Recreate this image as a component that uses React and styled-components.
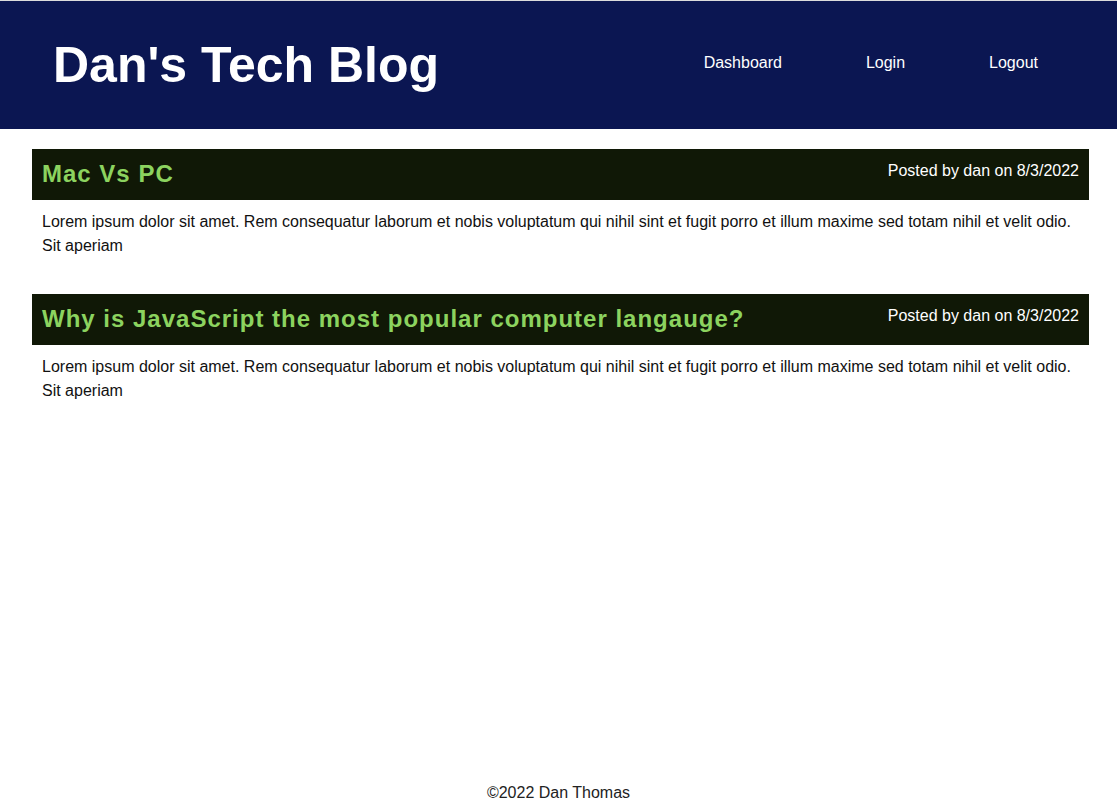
import React from 'react';
import styled, { createGlobalStyle } from 'styled-components';

const GlobalStyle = createGlobalStyle`
  html, body {
    margin: 0;
    padding: 0;
    background: #ffffff;
    font-family: "Liberation Sans", Arial, sans-serif;
  }
`;

const Page = styled.div`
  border-top: 1px solid #dcdcdc;
  display: flex;
  flex-direction: column;
  min-height: calc(100vh - 1px);
`;

const Header = styled.header`
  align-items: center;
  background-color: #0b1652;
  color: #ffffff;
  display: flex;
  height: 128px;
  justify-content: space-between;
  padding: 0 79px 0 53px;
`;

const SiteTitle = styled.h1`
  font-size: 50px;
  font-weight: 700;
  margin: 0;
`;

const Nav = styled.nav`
  display: flex;
  gap: 84px;
  position: relative;
  top: -2px;
`;

const NavLink = styled.a`
  color: #ffffff;
  font-size: 16px;
  text-decoration: none;
`;

const Main = styled.main`
  display: flex;
  flex: 1;
  flex-direction: column;
  gap: 36px;
  padding: 20px 28px 0 32px;
`;

const Post = styled.article``;

const PostHeader = styled.div`
  align-items: flex-start;
  background-color: #101806;
  box-sizing: border-box;
  display: flex;
  height: 51px;
  justify-content: space-between;
  padding: 0 10px;
`;

const PostTitle = styled.h2`
  color: #8cd35f;
  font-size: 24px;
  font-weight: 700;
  letter-spacing: 1px;
  margin: 0;
  padding-top: 11px;
`;

const PostMeta = styled.span`
  color: #ffffff;
  font-size: 16px;
  padding-top: 13px;
`;

const PostBody = styled.p`
  color: #111111;
  font-size: 16px;
  line-height: 24px;
  margin: 0;
  padding: 10px 10px 0;
`;

const Footer = styled.footer`
  color: #222222;
  font-size: 16px;
  line-height: 16px;
  text-align: center;
`;

const lorem =
  'Lorem ipsum dolor sit amet. Rem consequatur laborum et nobis voluptatum qui nihil sint et fugit porro et illum maxime sed totam nihil et velit odio. Sit aperiam';

const posts = [
  { id: 1, title: 'Mac Vs PC', author: 'dan', date: '8/3/2022', body: lorem },
  {
    id: 2,
    title: 'Why is JavaScript the most popular computer langauge?',
    author: 'dan',
    date: '8/3/2022',
    body: lorem,
  },
];

const App = () => {
  return (
    <>
      <GlobalStyle />
      <Page>
        <Header>
          <SiteTitle>Dan's Tech Blog</SiteTitle>
          <Nav>
            <NavLink href="#">Dashboard</NavLink>
            <NavLink href="#">Login</NavLink>
            <NavLink href="#">Logout</NavLink>
          </Nav>
        </Header>
        <Main>
          {posts.map((post) => (
            <Post key={post.id}>
              <PostHeader>
                <PostTitle>{post.title}</PostTitle>
                <PostMeta>
                  Posted by {post.author} on {post.date}
                </PostMeta>
              </PostHeader>
              <PostBody>{post.body}</PostBody>
            </Post>
          ))}
        </Main>
        <Footer>©2022 Dan Thomas</Footer>
      </Page>
    </>
  );
};

export default App;
